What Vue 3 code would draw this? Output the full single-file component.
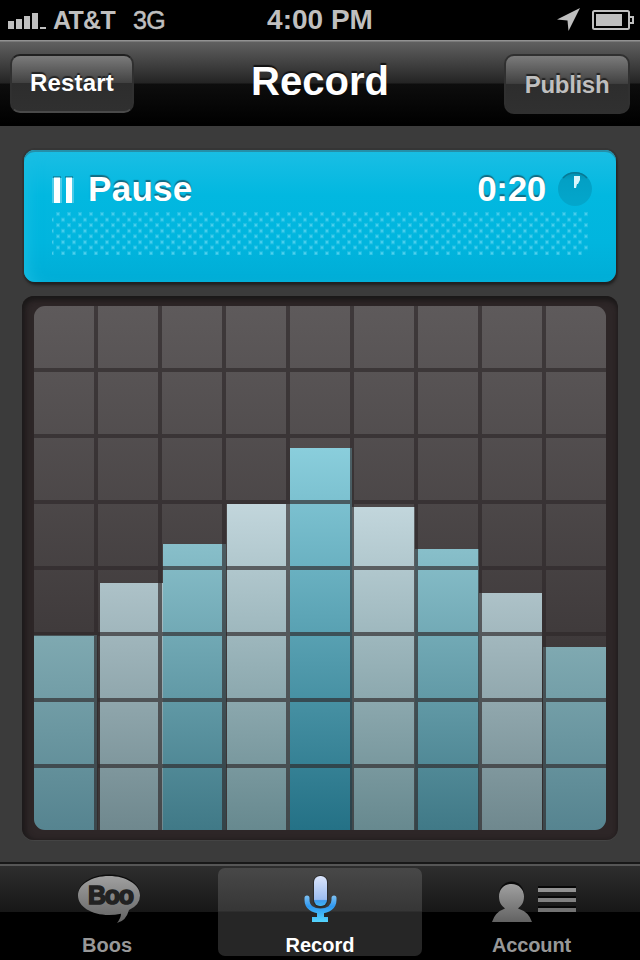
<script setup>
const bars = [
  { x: 0, w: 63, top: 329, from: '#7fa9b1', to: '#568490' },
  { x: 66, w: 63, top: 277, from: '#adc2c8', to: '#6f888e' },
  { x: 129, w: 63, top: 238, from: '#88bfca', to: '#407987' },
  { x: 193, w: 63, top: 198, from: '#c2d6dc', to: '#67898f' },
  { x: 256, w: 62, top: 142, from: '#8acedc', to: '#247186' },
  { x: 318, w: 63, top: 201, from: '#c2d6dc', to: '#67898f' },
  { x: 381, w: 64, top: 243, from: '#88bfca', to: '#407987' },
  { x: 445, w: 63, top: 287, from: '#adc2c8', to: '#6f888e' },
  { x: 509, w: 63, top: 341, from: '#7fa9b1', to: '#568490' },
]
const barStyle = (b) => ({
  left: b.x + 'px',
  top: b.top + 'px',
  width: b.w + 'px',
  background: `linear-gradient(${b.from}, ${b.to})`,
})
</script>

<template>
  <div class="screen">
    <div class="status">
      <div class="carrier">
        <svg class="signal" width="38" height="18" viewBox="0 0 38 18">
          <path fill="#bfbfbf" d="M0 9h6v8H0zM8 7h6v10H8zM16 4h6v13h-6zM24 1h6v16h-6zM32 15h6v2h-6z" />
        </svg>
        <span class="name">AT&amp;T</span><span class="net">3G</span>
      </div>
      <div class="clock">4:00 PM</div>
      <div class="indicators">
        <svg width="24" height="24" viewBox="0 0 24 24"><path fill="#bfbfbf" d="M24 0 12.500 23 11.500 12.500 1 11.500z" /></svg>
        <svg class="battery" width="42" height="20" viewBox="0 0 42 20">
          <rect x="1" y="1" width="36" height="18" rx="1.500" fill="none" stroke="#bfbfbf" stroke-width="2" />
          <path fill="#bfbfbf" d="M4 4h26v12H4z" />
          <path fill="none" stroke="#bfbfbf" stroke-width="2" d="M38 7h3v6h-3" />
        </svg>
      </div>
    </div>

    <header class="nav">
      <button class="btn restart">Restart</button>
      <h1>Record</h1>
      <button class="btn publish">Publish</button>
    </header>

    <main>
      <section class="pause">
        <div class="row">
          <svg width="22" height="27" viewBox="0 0 22 27">
            <path fill="#fff" opacity=".28" d="M0 2h10v25H0zM14 2h8v25h-8z" />
            <path fill="#126f89" opacity=".6" d="M1 0h8v2H1zM13 0h8v2h-8z" />
            <path fill="#fff" d="M2 1.500h6V27H2zM14 1.500h6V27h-6z" />
          </svg>
          <span class="label">Pause</span>
          <span class="time">0:20</span>
          <svg class="dial" width="34" height="34" viewBox="0 0 34 34">
            <defs>
              <linearGradient id="dialFill" x1="0" y1="0" x2="0" y2="1">
                <stop offset="0" stop-color="#028faf" /><stop offset=".25" stop-color="#03a0c5" /><stop offset="1" stop-color="#03a7cc" />
              </linearGradient>
            </defs>
            <circle cx="17" cy="17" r="17" fill="url(#dialFill)" />
            <path d="M5 6A16.300 16.300 0 0 1 29 6" fill="none" stroke="#087995" stroke-width="1.500" />
            <path d="M16 4h6v4l-2 4h-1l-1 4h-2z" fill="#d9f5fb" />
          </svg>
        </div>
        <svg class="dots" width="536" height="44" viewBox="0 0 536 44">
          <defs>
            <pattern id="dotGrid" width="11" height="11.200" patternUnits="userSpaceOnUse">
              <path fill="#21c0e4" d="M4 1h4v4H4zM0 6.800h2v4H0zM9 6.800h2v4H9z" />
              <path fill="#4fd0ed" d="M5 2h2v2H5zM0 7.800h1v2H0zM10 7.800h1v2h-1z" />
            </pattern>
          </defs>
          <rect width="536" height="44" fill="url(#dotGrid)" />
        </svg>
      </section>

      <section class="meter">
        <div class="chart">
          <div v-for="b in bars" :key="b.x" class="bar" :style="barStyle(b)"></div>
          <svg class="lines" width="572" height="524">
            <defs>
              <pattern id="cells" width="64" height="66" patternUnits="userSpaceOnUse">
                <path fill="#2e2729" fill-opacity=".66" d="M60 0h4v66H0v-4h60z" />
              </pattern>
            </defs>
            <rect width="572" height="524" fill="url(#cells)" />
          </svg>
        </div>
      </section>
    </main>

    <footer class="tabs">
      <div class="tab">
        <svg width="64" height="56" viewBox="0 0 64 56" class="bubble">
          <defs>
            <linearGradient id="gray" x1="0" y1="0" x2="0" y2="1">
              <stop offset="0" stop-color="#a0a0a0" /><stop offset="1" stop-color="#626262" />
            </linearGradient>
          </defs>
          <ellipse cx="34" cy="26" rx="31" ry="19.500" fill="#0c0c0c" />
          <path fill="url(#gray)" d="M34 8C16.500 8 3 16.500 3 27.500S16.500 47 34 47q6 0 12-1.200 0 4.200-4 9.200 9-2 12-13 11-5 11-14.500C65 16.500 51 8 34 8z" />
          <text x="13" y="35.500" class="boo">Boo</text>
        </svg>
        <span>Boos</span>
      </div>
      <div class="tab active">
        <svg width="34" height="56" viewBox="0 0 34 56">
          <defs>
            <linearGradient id="mic" x1="0" y1="0" x2="0" y2="1">
              <stop offset="0" stop-color="#dbe5fc" /><stop offset=".78" stop-color="#9dbdf0" /><stop offset=".82" stop-color="#3d9bed" /><stop offset="1" stop-color="#42b5f5" />
            </linearGradient>
            <linearGradient id="stand" x1="0" y1="28" x2="0" y2="54" gradientUnits="userSpaceOnUse">
              <stop offset="0" stop-color="#7cc0f2" /><stop offset=".4" stop-color="#2e98f0" /><stop offset="1" stop-color="#54d4fc" />
            </linearGradient>
          </defs>
          <path d="M4 30v2C4 39 10 43 17.500 43S31 39 31 32v-2" fill="none" stroke="url(#stand)" stroke-width="5" stroke-linecap="round" />
          <path fill="url(#stand)" d="M14 44h7v5h4v5H9v-5h5z" />
          <rect x="10" y="7" width="15" height="33" rx="7.500" fill="#2b2b2b" />
          <rect x="11" y="8" width="13" height="30" rx="6" fill="url(#mic)" />
        </svg>
        <span>Record</span>
      </div>
      <div class="tab">
        <svg width="86" height="56" viewBox="0 0 86 56">
          <path fill="#0a0a0a" d="M9 26a12.500 12.500 0 0 1 25 0z" />
          <path fill="url(#gray)" d="M21.500 16c7.500 0 12.500 5.500 12.500 12.500 0 6-2.500 9-6 12q11 3.500 14 13.500H2q3-10 13-13.500c-3.500-3-6-6-6-12C9 21.500 14 16 21.500 16z" />
          <path fill="#070707" d="M48 18h38v2H48zM48 28h38v2H48zM48 38h38v2H48z" />
          <path fill="#929292" d="M48 20h38v4H48z" /><path fill="#818181" d="M48 30h38v4H48z" /><path fill="#727272" d="M48 40h38v4H48z" />
        </svg>
        <span class="account">Account</span>
      </div>
    </footer>
  </div>
</template>

<style>
body { margin: 0; background: #3b3b3b; }
</style>

<style scoped>
* { box-sizing: border-box; }
.screen { width: 640px; height: 960px; overflow: hidden; display: flex; flex-direction: column; background: #3b3b3b; font-family: "Liberation Sans", Arial, sans-serif; font-weight: 700; }
.status { height: 40px; background: #000; color: #bfbfbf; display: grid; grid-template-columns: 220px 200px 220px; align-items: center; flex: none; }
.carrier { display: flex; align-items: center; padding-left: 8px; font-size: 25px; letter-spacing: -.7px; }
.signal { margin-top: 2px; }
.name { margin-left: 7px; }
.net { margin-left: 18px; font-weight: 400; -webkit-text-stroke: .5px #bfbfbf; }
.clock { text-align: center; font-size: 28px; }
.indicators { display: flex; justify-content: flex-end; align-items: center; gap: 12px; padding-right: 6px; }
.nav { height: 86px; flex: none; display: grid; grid-template-columns: 124px 1fr 126px; padding: 14px 10px 0; background: linear-gradient(#929292 0, #929292 1px, #606060 2px, #242424 43px, #0d0d0d 44px, #000 84px); align-items: start; }
h1 { margin: 0; padding-left: 2px; text-align: center; color: #fff; font-size: 40px; line-height: 54px; text-shadow: 0 -2px 1px #111; }
.btn { height: 59px; border: 2px solid #303030; border-top-color: #202020; border-bottom-color: #4a4a4a; border-radius: 10px; font: 700 24px/52px "Liberation Sans", Arial, sans-serif; letter-spacing: .2px; padding: 0 0 2px; color: #fff; background: linear-gradient(#7b7b7b, #414141 49%, #2d2d2d 50%, #303030); text-shadow: 0 -2px 1px #222; }
.publish { height: 60px; color: #bfbfbf; padding: 1px 0 0; letter-spacing: -.3px; border-color: #303030; }
main { height: 736px; padding: 24px 22px 0; flex: none; display: flex; flex-direction: column; align-items: center; }
.pause { width: 592px; height: 132px; flex: none; border-radius: 11px; padding: 21px 24px 0 28px; background: linear-gradient(#1bbee4, #02b8e0 34%, #01b5de 70%, #00add6); box-shadow: inset 0 2px #258fa9, inset 12px 0 16px -9px #18bee3, 1px 3px 3px #202020, 0 0 0 2px #353535; }
.row { display: flex; align-items: center; height: 36px; color: #fff; font-size: 35px; text-shadow: 0 -2px 1px #126b82; }
.label { margin-left: 14px; letter-spacing: .3px; }
.time { margin-left: auto; letter-spacing: -.3px; }
.dial { margin-left: 12px; }
.dots { display: block; margin-top: 4px; }
.meter { width: 596px; height: 544px; margin-top: 14px; border-radius: 12px; padding: 10px 12px; background: #2d2627; box-shadow: inset 0 4px 5px #1a1818, inset 4px 0 5px #211d1e, 0 1px #444; }
.chart { position: relative; width: 572px; height: 524px; border-radius: 11px; overflow: hidden; background: linear-gradient(#5e5a5b, #3c3738 70%); }
.bar { position: absolute; bottom: 0; }
.lines { position: absolute; inset: 0; }
.tabs { height: 98px; flex: none; border-top: 2px solid #181818; display: grid; grid-template-columns: 214px 212px 214px; background: linear-gradient(#565656 0 2px, #2e2e2e 2px, #171717 48px, #000 48px); }
.tab { display: flex; flex-direction: column; align-items: center; color: #989898; font-size: 20px; margin: 4px 4px; height: 88px; border-radius: 7px; }
.tab svg { flex: none; overflow: visible; }
.tab span { line-height: 22px; margin-top: 10px; }
.tab .account { letter-spacing: -.15px; margin-right: 3px; }
.active { color: #fff; background: linear-gradient(#484848, #363636 43px, #262626 44px); }
.boo { font: 700 25px "Liberation Sans", Arial, sans-serif; fill: #222; stroke: #222; stroke-width: 1.5px; letter-spacing: -1.3px; }
</style>
